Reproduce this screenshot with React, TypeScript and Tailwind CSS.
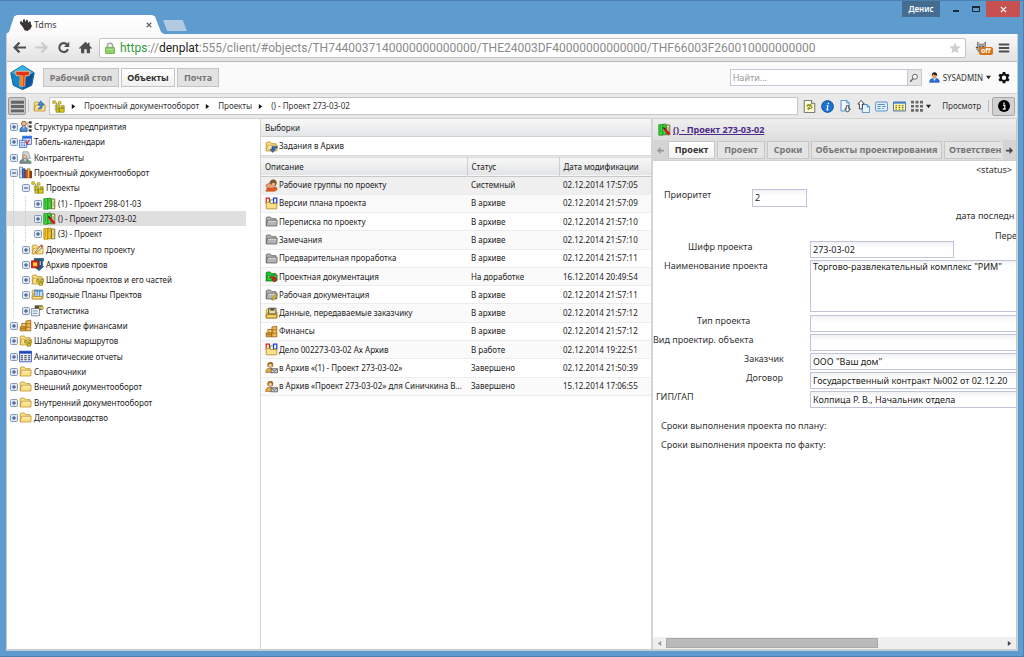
import React from "react";
import clsx from "clsx";

type IconProps = { name: string; className?: string };

const folderShape = (fill: string, stroke: string) => (
  <>
    <path d="M1.5 13.5v-10l1-1h4l1.5 2h5.5v2" fill={fill} stroke={stroke} />
    <path d="M1.5 13.5l1.500-7h12l-.5 7z" fill={fill} stroke={stroke} strokeLinejoin="round" />
    <path d="M3.800 7.700h10" stroke="#fff" strokeOpacity=".7" />
  </>
);
const yellow = folderShape("#fae08a", "#bd9128");
const gray = folderShape("#b4b4b4", "#606060");

const book = (fill: string, dark: string) => (
  <>
    <path d="M1 2h5v13H1z" fill={fill} stroke={dark} />
    <path d="M6 1.500h4v13H6z" fill={fill} stroke={dark} />
    <path d="M10.500 2.500h4v12h-4z" fill="#f4eeb0" stroke="#5a5a20" />
    <path d="M3 4v8M8 4v2M12.500 5v7" stroke={dark} strokeOpacity=".7" />
  </>
);

const diagram = (
  <>
    <path d="M2.5 3.5h3v3M4 6v6h5M5 4h4" stroke="#6b6b1c" fill="none" strokeDasharray="1 1" />
    <path d="M1 1h3v3H1zM8 2h3v3H8z" fill="#f0e22e" stroke="#8d8616" strokeWidth=".8" />
    <path d="M5 6h4v4H5zM9 10h6v5H9zM11 7h4v3h-4zM5 11h4v4H5z" fill="#dccb1c" stroke="#7b7410" strokeWidth=".8" />
  </>
);

const icons: Record<string, React.ReactNode> = {
  folder: yellow,
  grayFolder: gray,
  structure: (
    <>
      <circle cx="6" cy="4.5" r="3" fill="#e8b98a" stroke="#7a4b20" />
      <path d="M1 14c0-4 2-6 5-6s4 2 4 6z" fill="#4f8fd8" stroke="#28558f" />
      <path d="M5 8l1 3 1-3" fill="#fff" />
      <path d="M11 2v11M11 3h3M11 8h3M11 13h3" stroke="#888" fill="none" />
      <path d="M12.5 1.5h3v3h-3zM12.5 6.5h3v3h-3zM12.5 11.5h3v3h-3z" fill="#333" />
    </>
  ),
  calendar: (
    <>
      <path d="M4.5 1.5h11v10h-11z" fill="#dfeaff" stroke="#2b5fc4" />
      <path d="M4.5 1.5h11v3h-11z" fill="#2f6be0" />
      <path d="M.5 6.5h9v9h-9z" fill="#fff" stroke="#2b5fc4" />
      <path d="M.5 9.5h9M.5 12.5h9M3.5 6.5v9M6.5 6.5v9" stroke="#5b8ae6" />
      <path d="M13 6l-3 4M8 8l3 4" stroke="#d22" strokeWidth="1.5" />
    </>
  ),
  partner: (
    <>
      <path d="M5 1h6l3 8H4z" fill="#d9dde0" stroke="#8a9298" />
      <circle cx="7" cy="7" r="2.5" fill="#e5c29c" stroke="#8a6a4c" strokeWidth=".7" />
      <path d="M1 15c0-4 3-5 6-5s6 1 8 5z" fill="#7f8c94" stroke="#58636a" />
      <path d="M6 10l1.5 3L9 10z" fill="#e9eef2" />
      <path d="M9 13h6" stroke="#58a44e" strokeWidth="1.5" />
    </>
  ),
  books: (
    <>
      <path d="M.5 1.5h4v13h-4z" fill="#dfe7f2" stroke="#5f7aa0" />
      <path d="M4.5 3.5h3v11h-3z" fill="#3d74c9" stroke="#1f4788" />
      <path d="M7.5 5.5h3v9h-3z" fill="#d94b30" stroke="#8a2413" />
      <path d="M10.5 3.5h3v11h-3z" fill="#f3c63b" stroke="#9d7412" />
      <path d="M13.5 6.5h2v8h-2z" fill="#b43b2b" stroke="#6b1d12" />
      <path d="M2.5 4v7" stroke="#89a2c4" />
    </>
  ),
  diagram,
  greenBook: book("#46d640", "#1c8f1c"),
  yellowBook: book("#f6c626", "#b28105"),
  editedBook: (
    <>
      {book("#46d640", "#1c8f1c")}
      <path d="M8 7l6 7" stroke="#d8112b" strokeWidth="3" />
      <path d="M6.500 5.500l2 2" stroke="#222" strokeWidth="1.500" />
    </>
  ),
  docs: (
    <>
      {yellow}
      <path d="M6 10l7-8 2 2-7 7-3 1z" fill="#f7f3e3" stroke="#7a5a28" />
      <path d="M12 3l2 2" stroke="#d33" strokeWidth="1.5" />
    </>
  ),
  archive: (
    <>
      <path d="M4 .5h11.500v3H14v7h1.500L10 15.500 5.500 12V3.500H4z" fill="#1f5c8c" stroke="#153d5e" strokeWidth=".8" />
      <path d="M.5 3.500h9v8.500h-9z" fill="#e2231a" stroke="#a3120c" />
      <path d="M2.500 5.500h5v4.500h-5z" fill="#f9cf3a" />
      <path d="M11.500 4v5" stroke="#8cc7ec" strokeWidth="1.500" />
    </>
  ),
  template: (
    <>
      {yellow}
      <path d="M7 8h3v3H7zM12 8h3v3h-3zM10 12h4v3h-4z" fill="#e9d71f" stroke="#6e6408" strokeWidth=".8" />
    </>
  ),
  plans: (
    <>
      {yellow}
      <path d="M4.500 2.500h10v8h-10z" fill="#c7def6" stroke="#4e80b8" />
      <path d="M4.500 2.500h10v2h-10z" fill="#4e8fd6" />
      <path d="M7.500 4v6M10.500 4v6" stroke="#4e80b8" />
      <path d="M1.500 10.500h12v3h-12z" fill="#fae08a" stroke="#bd9128" />
    </>
  ),
  stats: (
    <>
      <path d="M.5 5.500h10v9h-10z" fill="#eef2f6" stroke="#6b7b8b" />
      <path d="M2 8.500h6M2 11.500h6" stroke="#5b7fae" />
      <path d="M5 2h9l1 4-4 1-2-2H5z" fill="#5a5a3a" stroke="#222" strokeWidth=".6" />
      <path d="M10 3h5v3h-5z" fill="#e8c43c" />
    </>
  ),
  finance: (
    <>
      <path d="M1.500 9.500h7v5h-7z" fill="#e0a83a" stroke="#97630f" />
      <path d="M8.500 2.500l6-1v13h-6z" fill="#eebb58" stroke="#97630f" />
      <path d="M3.500 5.500h5v4h-5z" fill="#f2ca72" stroke="#97630f" />
      <path d="M8.500 6h6M8.500 10h6M1.500 12h7" stroke="#97630f" />
    </>
  ),
  report: (
    <>
      <path d="M.5 1.500h15v13H.5z" fill="#eef4ff" stroke="#1c46c0" />
      <path d="M.5 1.500h15v3H.5z" fill="#1c46c0" />
      <path d="M2 7h3M2 9.500h3M2 12h3M6.500 7h3M6.500 9.500h3M6.500 12h3M11 7h3M11 9.500h3M11 12h3" stroke="#334" strokeWidth="1.300" />
    </>
  ),
  tasks: (
    <>
      {yellow}
      <path d="M8.500 8v3.500H6l3.500 4 3.500-4h-1.500V10H15V8z" fill="#2f62b8" stroke="#17356c" strokeWidth=".5" />
    </>
  ),
  group: (
    <>
      <path d="M6 5c0-3 2-4 4.500-4S14 3 14 5l-1 3H8z" fill="#8a5a2d" stroke="#55351a" strokeWidth=".6" />
      <path d="M1 8c1-2 4-3 6-2l5 2v4H3z" fill="#e9a273" stroke="#894523" strokeWidth=".6" />
      <path d="M1 15l2-4 5 1 6-2 1 3-3 2z" fill="#ee5a1c" stroke="#9b2d08" strokeWidth=".6" />
      <path d="M9 5h3v3H9z" fill="#f3cfa0" />
    </>
  ),
  versions: (
    <>
      <path d="M1.500 1.500h4v6h-4z" fill="#fff" stroke="#e02020" strokeWidth="1.500" />
      <path d="M6.500 3.500h4v5h-4z" fill="#fff" stroke="#2aa02a" />
      <path d="M10.500 1.500h4v6h-4z" fill="#fff" stroke="#2038e0" strokeWidth="1.500" />
      <path d="M1.500 14.500v-8h4l1 1.500h8v6.500z" fill="#fae08a" stroke="#b98a1e" />
    </>
  ),
  greenFolder: (
    <>
      {folderShape("#19d62a", "#0a6d12")}
      <path d="M6 8h5c2 0 2 1 2 3h2l-3.500 4L8 11h2V9.500H6z" fill="#d6201c" stroke="#701010" strokeWidth=".5" />
    </>
  ),
  grayEdit: (
    <>
      {gray}
      <path d="M8 14l5-6 2 1.500-5 5.500z" fill="#f0d31c" stroke="#6a5a08" strokeWidth=".8" />
    </>
  ),
  floppy: (
    <>
      {yellow}
      <path d="M4.500 1.500h9v7h-9z" fill="#e8dfa0" stroke="#3e3a20" />
      <path d="M6.500 1.500h5v3h-5z" fill="#545040" />
      <path d="M1.500 9.500h13v4h-13z" fill="#f8d86a" stroke="#8b6410" />
    </>
  ),
  userMail: (
    <>
      <path d="M3 4c0-3 7-4 7 0v3H3z" fill="#9c6a1d" />
      <circle cx="6.500" cy="5.500" r="2.500" fill="#f3cf9e" stroke="#8a5a1c" strokeWidth=".7" />
      <path d="M1 14c0-4 2-5 5-5 2 0 4 1 4 3v2z" fill="#f0b040" stroke="#8a5a1c" strokeWidth=".8" />
      <path d="M7.500 9.500h8v5h-8z" fill="#c8ccd0" stroke="#55595d" />
      <path d="M7.500 9.500l4 3 4-3" fill="none" stroke="#55595d" />
    </>
  ),
  folderUp: (
    <>
      {yellow}
      <path d="M6 11c5 1 6-2 5-5h2.500L9.500 1 6 6h2.500c.5 2 0 4-2.500 5z" fill="#3b8ede" stroke="#18518f" strokeWidth=".7" />
    </>
  ),
  refresh: (
    <>
      <path d="M1.500.500h9l4 4v11h-13z" fill="#fbfbd8" stroke="#555" />
      <path d="M10.500.500v4h4" fill="#fff" stroke="#555" />
      <path d="M4 8c0-3 4-4 5-2V4l2 3-3 2V7.500C7 6.500 6 7 6 8zM12 8c0 3-4 4-5 3v2l-2-3 3-2v1.500c1 1 2 .5 2-1.500z" fill="#8a8c10" />
    </>
  ),
  info: (
    <>
      <circle cx="8" cy="8" r="7.300" fill="#1b74d1" stroke="#0c4a91" />
      <path d="M9 3.500v1.800M8.500 7l-1 5h1.500M7 7h1.500" stroke="#fff" strokeWidth="1.600" fill="none" />
    </>
  ),
  docDown: (
    <>
      <path d="M2.500.500h7l3 3v10h-10z" fill="#f2f8ff" stroke="#2d7cc4" />
      <path d="M9.500.500v3h3" fill="none" stroke="#2d7cc4" />
      <path d="M9 7h3v4h2l-3.500 4L7 11h2z" fill="#fff" stroke="#222" />
    </>
  ),
  docUp: (
    <>
      <path d="M6.500 5.500h6l3 3v7h-9z" fill="#e5f2ff" stroke="#2d7cc4" />
      <path d="M3 11V5H1l4-4.500L9 5H6.500v6z" fill="#fff" stroke="#222" />
      <path d="M12.500 5.500v3h3" fill="none" stroke="#2d7cc4" />
    </>
  ),
  card: (
    <>
      <rect x=".5" y="2.500" width="15" height="11" rx="2" fill="#e4f1fd" stroke="#2d7cc4" />
      <path d="M3 5.500h9M3 8h4M3 10.500h4M9 8h4M9 10.500h2" stroke="#3b6ea5" />
    </>
  ),
  grid: (
    <>
      <path d="M.5 2.500h15v11H.5z" fill="#fdf6a8" stroke="#2457a8" />
      <path d="M.5 2.500h15v2H.5z" fill="#3d7edb" />
      <path d="M3 7h2M7 7h2M11 7h2M3 9.500h2M7 9.500h2M11 9.500h2M3 12h2M7 12h2M11 12h2" stroke="#8a7a10" strokeWidth="1.500" />
    </>
  ),
  dots: <path d="M0 1h4v3.500H0zM6 1h4v3.500H6zM12 1h4v3.500h-4zM0 6.500h4V10H0zM6 6.500h4V10H6zM12 6.500h4V10h-4zM0 12h4v3.500H0zM6 12h4v3.500H6zM12 12h4v3.500h-4z" fill="#6a6a6a" />,
  user: (
    <>
      <path d="M1 15c0-5 3-6 7-6s7 1 7 6z" fill="#2c6fe0" stroke="#173f91" strokeWidth=".8" />
      <path d="M6 9l2 4 2-4z" fill="#fff" />
      <circle cx="8" cy="5.500" r="3.500" fill="#d99a63" />
      <path d="M4 5c0-6 8-6 8 0-3 0-4-1-5-2-1 1-2 2-3 2z" fill="#20160f" />
    </>
  ),
  infoDark: (
    <>
      <circle cx="8" cy="8" r="8" fill="#000" />
      <path d="M6.500 7H9v5M6.300 12h4" stroke="#ddd" strokeWidth="1.700" fill="none" />
      <path d="M7.200 3.200h1.900v2H7.200z" fill="#ddd" />
    </>
  ),
  search: (
    <>
      <circle cx="9.500" cy="6" r="4" fill="#fff" stroke="#555" strokeWidth="1.400" />
      <path d="M6.500 9L2 14" stroke="#555" strokeWidth="2" />
    </>
  ),
  back: <path d="M8 2L2 8l6 6M2.500 8H16" stroke="#4f4f4f" strokeWidth="2.700" fill="none" />,
  forward: <path d="M8 2l6 6-6 6M13.500 8H0" stroke="#cbcbcb" strokeWidth="2.700" fill="none" />,
  reload: (
    <>
      <path d="M12.500 4.500A5.500 5.500 0 1 0 13.500 10" stroke="#4f4f4f" strokeWidth="2.500" fill="none" />
      <path d="M15 1v6.500H8.500z" fill="#4f4f4f" />
    </>
  ),
  home: <path d="M8 1L0 8.500l1 1.300L2.500 8.500V15H6.500v-5h3v5h4V8.500L15 9.800l1-1.300-3-2.800V2h-2v1.800z" fill="#4f4f4f" />,
  lock: (
    <>
      <path d="M4.500 8V5a3.500 3.500 0 0 1 7 0v3" stroke="#a8a8a8" strokeWidth="2" fill="none" />
      <rect x="2" y="7" width="12" height="8.500" rx="1" fill="#8fd06b" stroke="#5ba33a" />
      <path d="M3 10h10" stroke="#b9e59f" />
    </>
  ),
  star: <path d="M8 .5l2.200 5 5.500.5-4.200 3.600 1.300 5.400L8 12.200 3.200 15l1.300-5.400L.3 6l5.500-.5z" fill="#cfcfcf" />,
  menu: <path d="M1 2h14v2.600H1zM1 6.700h14v2.600H1zM1 11.400h14V14H1z" fill="#4f4f4f" />,
  bars: <path d="M0 1h16v3.500H0zM0 6.300h16v3.500H0zM0 11.600h16v3.500H0z" fill="#666" />,
  hand: <path d="M0 6c0-3 1-4 2-3l2 2 0-4 2-1 1.500 4L8.500 1l2 .5.500 3.500 2-2 1.500 1 0 3 1.500 2-2 4-4 3-4-1-2-4z" fill="#3a3535" />,
  gear: (
    <path
      fillRule="evenodd"
      d="M6.300 0h3.400l.5 2.300 1.300.7 2.200-.8 1.700 2.900-1.700 1.600v1.600l1.700 1.600-1.700 2.900-2.200-.8-1.300.7-.5 2.300H6.300l-.5-2.300-1.300-.7-2.200.8L.6 9.900l1.700-1.600V6.700L.6 5.100l1.700-2.900 2.200.8 1.300-.7zM8 4.700a2.900 2.900 0 1 0 0 5.800 2.900 2.900 0 0 0 0-5.800z"
      fill="#111"
    />
  ),
  cat: (
    <>
      <path d="M3 1l3 3h4l3-3v6l1 3-3 4H5L2 10l1-3z" fill="#a5a5a5" stroke="#666" strokeWidth=".8" />
      <path d="M5 7h2M9 7h2M6 10h4M1 8h3M12 8h3" stroke="#333" />
    </>
  ),
  logo: (
    <>
      <path d="M8 .3l7.500 4.700-1.600 8L8 15.700l-5.900-2.700L.5 5z" fill="#1287c6" stroke="#0b5a92" strokeWidth=".6" />
      <path d="M8 .5l7 4.500-4 2-3-3-3 3-4-2z" fill="#35b6e4" />
      <path d="M10 8l5-3-1.500 7.800L8 15.500z" fill="#0c4f96" />
      <path d="M3.500 4h9.200l-.5 2.800H9.700l-.3 6.700H6.300l.2-6.700H4z" fill="#e23414" stroke="#f7b186" strokeWidth=".6" />
      <path d="M7 6.500h1.500v6.500H6.800z" fill="#f8921e" />
    </>
  ),
};

function Icon({ name, className = "size-3" }: IconProps) {
  return (
    <svg viewBox="0 0 16 16" fill="none" aria-hidden="true" className={clsx("shrink-0", className)}>
      {icons[name]}
    </svg>
  );
}

function Caret({ className }: { className?: string }) {
  return (
    <svg viewBox="0 0 6 6" aria-hidden="true" className={clsx("size-[5px] shrink-0", className)}>
      <path d="M0 1h6L3 5z" fill="#222" />
    </svg>
  );
}

const tree = [
  { level: 0, open: false, icon: "structure", label: "Структура предприятия" },
  { level: 0, open: false, icon: "calendar", label: "Табель-календари" },
  { level: 0, open: false, icon: "partner", label: "Контрагенты" },
  { level: 0, open: true, icon: "books", label: "Проектный документооборот" },
  { level: 1, open: true, icon: "diagram", label: "Проекты" },
  { level: 2, open: false, icon: "greenBook", label: "(1) - Проект 298-01-03" },
  { level: 2, open: false, icon: "editedBook", label: "() - Проект 273-03-02", selected: true },
  { level: 2, open: false, icon: "yellowBook", label: "(3) - Проект" },
  { level: 1, open: false, icon: "docs", label: "Документы по проекту" },
  { level: 1, open: false, icon: "archive", label: "Архив проектов" },
  { level: 1, open: false, icon: "template", label: "Шаблоны проектов и его частей" },
  { level: 1, open: false, icon: "plans", label: "сводные Планы Пректов" },
  { level: 1, open: false, icon: "stats", label: "Статистика" },
  { level: 0, open: false, icon: "finance", label: "Управление финансами" },
  { level: 0, open: false, icon: "template", label: "Шаблоны маршрутов" },
  { level: 0, open: false, icon: "report", label: "Аналитические отчеты" },
  { level: 0, open: false, icon: "folder", label: "Справочники" },
  { level: 0, open: false, icon: "folder", label: "Внешний документооборот" },
  { level: 0, open: false, icon: "folder", label: "Внутренний документооборот" },
  { level: 0, open: false, icon: "folder", label: "Делопроизводство" },
];

const rows = [
  ["group", "Рабочие группы по проекту", "Системный", "02.12.2014 17:57:05"],
  ["versions", "Версии плана проекта", "В архиве", "02.12.2014 21:57:09"],
  ["grayFolder", "Переписка по проекту", "В архиве", "02.12.2014 21:57:10"],
  ["grayFolder", "Замечания", "В архиве", "02.12.2014 21:57:10"],
  ["grayFolder", "Предварительная проработка", "В архиве", "02.12.2014 21:57:11"],
  ["greenFolder", "Проектная документация", "На доработке", "16.12.2014 20:49:54"],
  ["grayEdit", "Рабочая документация", "В архиве", "02.12.2014 21:57:11"],
  ["floppy", "Данные, передаваемые заказчику", "В архиве", "02.12.2014 21:57:12"],
  ["finance", "Финансы", "В архиве", "02.12.2014 21:57:12"],
  ["versions", "Дело 002273-03-02 Ах Архив", "В работе", "02.12.2014 19:22:51"],
  ["userMail", "в Архив «(1) - Проект 273-03-02»", "Завершено", "02.12.2014 21:50:39"],
  ["userMail", "в Архив «Проект 273-03-02» для Синичкина В...", "Завершено", "15.12.2014 17:06:55"],
];

function TitleBar() {
  return (
    <div className="flex h-[34px] items-start justify-between border-t border-[#4b80b0] pr-[3px] pl-[6px]">
      <div className="flex items-end self-end">
        <div className="flex h-[19px] w-[158px] items-center bg-linear-to-b from-white to-[#fafafa] pr-[12px] pl-[14px] [clip-path:polygon(0_100%,3px_90%,8px_8%,11px_0,146px_0,149px_8%,155px_90%,158px_100%)]">
          <Icon name="hand" />
          <span className="ml-[2px] flex-1 text-[9px] text-[#444]">Tdms</span>
          <button aria-label="Закрыть вкладку" className="text-[#666]">
            <svg viewBox="0 0 8 8" className="size-[6px]"><path d="M1 1l6 6M7 1L1 7" stroke="currentColor" strokeWidth="1.600" /></svg>
          </button>
        </div>
        <button aria-label="Новая вкладка" className="-ml-px mb-[3px] h-[11px] w-[24px] bg-[#b3cbe2] [clip-path:polygon(0_0,82%_0,100%_100%,18%_100%)]" />
      </div>
      <div className="flex h-4 items-stretch">
        <button className="mr-[6px] w-[38px] bg-[#456d92] text-[8px] font-semibold text-white">Денис</button>
        <button aria-label="Свернуть" className="flex w-[20px] items-center justify-center">
          <span className="mt-1 h-[2px] w-[6px] bg-[#1d2b38]" />
        </button>
        <button aria-label="Развернуть" className="flex w-[20px] items-center justify-center">
          <span className="h-[6px] w-[8px] border border-t-2 border-[#1d2b38]" />
        </button>
        <button aria-label="Закрыть" className="flex w-[34px] items-center justify-center bg-[#c75050] text-white">
          <svg viewBox="0 0 8 8" className="size-[7px]"><path d="M1 1l6 6M7 1L1 7" stroke="currentColor" strokeWidth="1.500" /></svg>
        </button>
      </div>
    </div>
  );
}

function BrowserBar() {
  return (
    <div className="flex h-[28px] items-center border-b border-[#b8b8b8] bg-linear-to-b from-[#fafafa] to-[#e2e2e2] pr-[7px] pl-[6px]">
      <button aria-label="Назад"><Icon name="back" className="size-[13px]" /></button>
      <button aria-label="Вперёд" className="ml-[9px]"><Icon name="forward" className="size-[13px]" /></button>
      <button aria-label="Обновить" className="ml-[9px]"><Icon name="reload" className="size-[13px]" /></button>
      <button aria-label="Домой" className="ml-[9px]"><Icon name="home" className="size-[13px]" /></button>
      <div className="ml-[7px] flex h-[20px] flex-1 items-center overflow-hidden rounded-xs border border-[#c4c4c4] bg-white pr-1 pl-1 font-[Roboto,sans-serif] text-[12px] whitespace-nowrap text-[#8a8a8a]">
        <Icon name="lock" className="mr-1 size-[12px]" />
        <span className="flex-1">
          <span className="text-[#2f9c3c]">https</span>://<span className="text-[#222]">denplat</span>
          :555/client/#objects/TH7440037140000000000000/THE24003DF40000000000000/THF66003F260010000000000
        </span>
        <Icon name="star" className="size-[12px]" />
      </div>
      <button aria-label="Расширение" className="relative ml-[9px]">
        <Icon name="cat" className="size-[13px]" />
        <span className="absolute top-[6px] left-[4px] rounded-xs bg-[#d9731a] px-[2px] text-[7px] leading-[8px] font-bold text-white">off</span>
      </button>
      <button aria-label="Меню" className="ml-[10px]"><Icon name="menu" /></button>
    </div>
  );
}

function AppHeader() {
  return (
    <header className="flex h-[32px] items-center border-b border-[#d2d2d2] bg-[#fafafa] pr-[7px] pl-[3px]">
      <Icon name="logo" className="size-[25px]" />
      <nav className="ml-[8px] flex gap-[2px] text-[9px] font-bold">
        <button className="h-[19px] w-[76px] border border-[#c4c4c4] bg-[#e2e2e2] text-[#777]">Рабочий стол</button>
        <button className="h-[19px] w-[54px] border border-[#c4c4c4] bg-linear-to-b from-white to-[#f0f0f0] text-[#333]">Объекты</button>
        <button className="h-[19px] w-[42px] border border-[#c4c4c4] bg-[#e2e2e2] text-[#777]">Почта</button>
      </nav>
      <div className="ml-auto flex h-[17px]">
        <input
          type="search"
          aria-label="Найти"
          placeholder="Найти..."
          className="w-[178px] border border-[#c3c7da] bg-white px-[2px] text-[9px] placeholder:text-[#999]"
        />
        <button aria-label="Искать" className="flex w-[14px] items-center justify-center border border-l-0 border-[#c8c8d2] bg-[#e6e6e6]">
          <Icon name="search" className="size-[10px]" />
        </button>
      </div>
      <button className="ml-[7px] flex items-center gap-[3px] text-[8px] text-[#333]">
        <Icon name="user" className="size-[11px]" />
        SYSADMIN
        <Caret />
      </button>
      <button aria-label="Настройки" className="ml-[7px]"><Icon name="gear" /></button>
    </header>
  );
}

const crumbs = ["Проектный документооборот", "Проекты", "() - Проект 273-03-02"];
const tools = [
  ["refresh", "Обновить"],
  ["info", "Свойства"],
  ["docDown", "Выгрузить"],
  ["docUp", "Загрузить"],
  ["card", "Карточка"],
  ["grid", "Таблица"],
];

function PathBar() {
  return (
    <div className="flex h-[25px] items-center border-b border-[#d0d0d0] bg-[#e9e9e9] pr-[2px] pl-px">
      <button aria-label="Дерево" className="flex h-[18px] w-[18px] items-center justify-center rounded-xs border border-[#999] bg-[#c9c9c9]">
        <Icon name="bars" className="size-[13px]" />
      </button>
      <span className="ml-[2px] h-3 w-px bg-[#c4c4c4]" />
      <button aria-label="Вверх" className="ml-[4px]"><Icon name="folderUp" className="size-[13px]" /></button>
      <nav className="ml-[3px] flex h-[18px] flex-1 items-center border border-[#c6c6c6] bg-white pl-[2px] text-[8px] text-[#333]">
        <Icon name="diagram" className="size-[13px]" />
        {crumbs.map((c) => (
          <React.Fragment key={c}>
            <svg viewBox="0 0 6 6" aria-hidden="true" className="mr-[8px] ml-[6px] size-[5px]"><path d="M1 0l4 3-4 3z" fill="#111" /></svg>
            <a href="#" className="whitespace-nowrap">{c}</a>
          </React.Fragment>
        ))}
      </nav>
      <div className="ml-[5px] flex gap-[5px]">
        {tools.map(([icon, title]) => (
          <button key={icon} aria-label={title}><Icon name={icon} className="size-[13px]" /></button>
        ))}
      </div>
      <button aria-label="Вид" className="ml-[5px] flex items-center gap-[3px]">
        <Icon name="dots" className="size-[12px]" />
        <Caret />
      </button>
      <button className="ml-[11px] text-[8px] text-[#333]">Просмотр</button>
      <span className="ml-[7px] h-3 w-px bg-[#bbb]" />
      <button aria-label="Панель сведений" className="ml-[3px] flex h-[19px] w-[23px] items-center justify-center rounded-xs border border-[#a8a8a8] bg-[#d2d2d2]">
        <Icon name="infoDark" className="size-3" />
      </button>
    </div>
  );
}

function TreePanel() {
  return (
    <aside className="w-[253px] shrink-0 bg-white">
      <ul className="grid h-[306px] auto-rows-fr pr-[14px] text-[8px] leading-[15px] text-[#222]">
        {tree.map((item) => (
          <li key={item.label} className={clsx("flex items-center pl-[2px]", item.selected && "bg-[#dfdfdf]")}>
            {Array.from({ length: item.level }, (_, i) => (
              <span key={i} className="h-full w-3 shrink-0 pl-1"><span className="block h-full border-l border-dotted border-[#ccc]" /></span>
            ))}
            <button aria-label={item.open ? "Свернуть" : "Развернуть"}>
              <svg viewBox="0 0 9 9" className="size-[9px]">
                <rect x="1.500" y="1.500" width="7" height="7" rx="1" fill="#dfe9f5" stroke="#8499b5" />
                <path d={item.open ? "M3 5h4" : "M3 5h4M5 3v4"} stroke="#2f4a78" />
              </svg>
            </button>
            <Icon name={item.icon} className="ml-px size-[13px]" />
            <span className="ml-[2px] whitespace-nowrap">{item.label}</span>
          </li>
        ))}
      </ul>
    </aside>
  );
}

function ListPanel() {
  return (
    <section className="w-[393px] shrink-0 border-r-2 border-l border-[#d4d4d4] bg-white text-[8px] text-[#222]">
      <h2 className="flex h-[18px] items-center border-b border-[#d0d0d0] bg-linear-to-b from-[#f8f8f8] to-[#e4e6e8] pl-1">Выборки</h2>
      <a href="#" className="flex h-[18px] items-center pl-1">
        <Icon name="tasks" className="size-[13px]" />
        <span className="ml-px">Задания в Архив</span>
      </a>
      <div className="h-[3px] border-y border-[#d8d8d8] bg-[#ececec]" />
      <table className="h-[238px] w-full table-fixed border-collapse text-left">
        <thead>
          <tr className="h-[18px] border-b border-[#c8c8c8] bg-linear-to-b from-[#f8f8f8] to-[#e2e4e6]">
            <th className="w-[206px] border-r border-[#d0d0d0] py-0 pl-1 font-normal">Описание</th>
            <th className="w-[92px] border-r border-[#d0d0d0] py-0 pl-1 font-normal">Статус</th>
            <th className="py-0 pl-1 font-normal">Дата модификации</th>
          </tr>
        </thead>
        <tbody>
          {rows.map(([icon, title, status, date], i) => (
            <tr key={title} className={clsx("border-b border-[#ededed]", i === 0 ? "bg-[#efefef]" : i % 2 ? "bg-[#fafafa]" : "bg-white")}>
              <td className="py-0 pl-1">
                <div className="flex items-center whitespace-nowrap">
                  <Icon name={icon} className="size-[13px]" />
                  <span className="ml-px">{title}</span>
                </div>
              </td>
              <td className="py-0 pl-1">{status}</td>
              <td className="py-0 pl-1 whitespace-nowrap">{date}</td>
            </tr>
          ))}
        </tbody>
      </table>
    </section>
  );
}

const fieldStyle = "border border-[#bfc4dc] bg-linear-to-b from-[#f2f2f5] to-white px-[2px] text-[9px] text-[#222]";

const fields = [
  { id: "type", label: "Тип проекта", value: "", pad: "pl-[44px]" },
  { id: "kind", label: "Вид проектир. объекта", value: "", pad: "pl-0" },
  { id: "customer", label: "Заказчик", value: 'ООО "Ваш дом"', pad: "pl-[91px]" },
  { id: "contract", label: "Договор", value: "Государственный контракт №002 от 02.12.20", pad: "pl-[93px]" },
  { id: "chief", label: "ГИП/ГАП", value: "Колпица Р. В., Начальник отдела", pad: "pl-[3px]" },
];

function ProjectForm() {
  return (
    <form className="flex-1 overflow-hidden text-[9px] leading-3 whitespace-nowrap text-[#333]">
      <p className="pt-[3px] pr-1 text-right">&lt;status&gt;</p>
      <div className="mt-[13px] flex h-[18px]">
        <label htmlFor="priority" className="w-[99px] pl-[11px]">Приоритет</label>
        <input id="priority" defaultValue="2" className={clsx("w-[55px] to-40%", fieldStyle)} />
      </div>
      <p className="mt-[3px] ml-[303px]">дата последн</p>
      <p className="mt-2 ml-[342px]">Пере</p>
      <div className="-mt-px flex h-[17px]">
        <label htmlFor="code" className="w-[157px] pl-[35px]">Шифр проекта</label>
        <input id="code" defaultValue="273-03-02" className={clsx("w-[144px] to-40%", fieldStyle)} />
      </div>
      <div className="mt-[2px] flex h-[52px]">
        <label htmlFor="title" className="w-[157px] shrink-0 pl-[11px]">Наименование проекта</label>
        <textarea
          id="title"
          defaultValue={'Торгово-развлекательный комплекс "РИМ"'}
          className={clsx("w-full resize-none overflow-hidden border-r-0 to-10% whitespace-nowrap", fieldStyle)}
        />
      </div>
      <div className="mt-[3px] flex flex-col gap-[2px]">
        {fields.map((f) => (
          <div key={f.id} className="flex h-[17px]">
            <label htmlFor={f.id} className={clsx("w-[157px] shrink-0", f.pad)}>{f.label}</label>
            <input id={f.id} defaultValue={f.value} className={clsx("w-full min-w-0 border-r-0 to-40%", fieldStyle)} />
          </div>
        ))}
      </div>
      <p className="mt-3 ml-2">Сроки выполнения проекта по плану:</p>
      <p className="mt-[7px] ml-2">Сроки выполнения проекта по факту:</p>
    </form>
  );
}

function DetailPanel() {
  const tab = "h-[18px] shrink-0 border border-[#c6c6c6]";
  return (
    <section className="flex min-w-0 flex-1 flex-col border-r border-[#c8c8c8] bg-white">
      <div className="flex h-[21px] items-center bg-linear-to-b from-[#efefef] to-[#dedede] pl-[5px]">
        <Icon name="editedBook" className="size-[13px]" />
        <a href="#" className="ml-[2px] text-[9px] font-bold text-[#4b2a8c] underline">() - Проект 273-03-02</a>
      </div>
      <div className="flex h-[21px] items-center border-b border-[#cfcfcf] bg-[#dedede] text-[9px] font-bold text-[#777]">
        <button aria-label="Влево" className="flex h-full w-[15px] shrink-0 items-center justify-center bg-[#d4d4d4]">
          <svg viewBox="0 0 8 8" className="size-[7px]"><path d="M0 4l4-4v3h4v2H4v3z" fill="#999" /></svg>
        </button>
        <div className="flex min-w-0 flex-1 gap-[2px] overflow-hidden">
          <button className={clsx(tab, "w-[47px] bg-linear-to-b from-white to-[#f2f2f2] text-[#333]")}>Проект</button>
          <button className={clsx(tab, "w-[48px] bg-[#e4e4e4]")}>Проект</button>
          <button className={clsx(tab, "w-[42px] bg-[#e4e4e4]")}>Сроки</button>
          <button className={clsx(tab, "w-[131px] bg-[#e4e4e4]")}>Объекты проектирования</button>
          <button className={clsx(tab, "border-r-0 bg-[#e4e4e4] pl-[4px]")}>Ответствен</button>
        </div>
        <button aria-label="Вправо" className="flex h-full w-[13px] shrink-0 items-center justify-center bg-[#d4d4d4]">
          <svg viewBox="0 0 8 8" className="size-[7px]"><path d="M8 4L4 0v3H0v2h4v3z" fill="#444" /></svg>
        </button>
      </div>
      <ProjectForm />
      <div className="flex h-[12px] items-center bg-[#efefef] px-[4px]">
        <svg viewBox="0 0 6 6" className="size-[5px]"><path d="M5 0v6L1 3z" fill="#999" /></svg>
        <div className="mx-[4px] flex-1"><div className="h-[10px] w-[63%] border border-[#a8a8a8] bg-[#bababa]" /></div>
        <svg viewBox="0 0 6 6" className="size-[5px]"><path d="M1 0v6l4-3z" fill="#444" /></svg>
      </div>
    </section>
  );
}

export default function App() {
  return (
    <div className="flex min-h-screen flex-col border-r border-b border-[#4b80b0] bg-[#5e9bce] pb-[5px] font-['Noto_Sans',sans-serif]">
      <TitleBar />
      <div className="mr-[5px] ml-[6px] flex flex-1 flex-col border-r border-b-2 border-l border-[#c4ccd4] bg-white">
        <BrowserBar />
        <AppHeader />
        <PathBar />
        <main className="flex flex-1">
          <TreePanel />
          <ListPanel />
          <DetailPanel />
        </main>
      </div>
    </div>
  );
}
